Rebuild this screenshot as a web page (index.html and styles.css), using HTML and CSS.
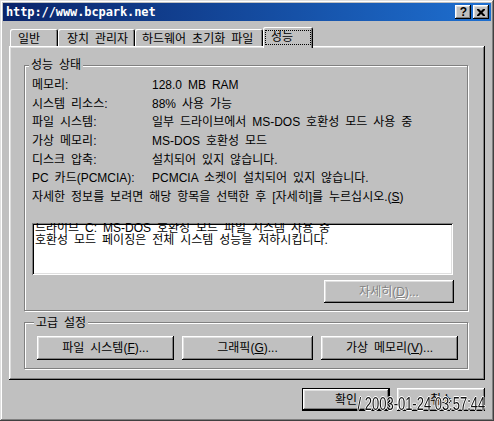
FILE: index.html
```html
<!DOCTYPE html>
<html lang="ko">
<head>
<meta charset="utf-8">
<title>시스템 등록 정보</title>
<link rel="stylesheet" href="styles.css">
</head>
<body>
<div class="window">
  <div class="titlebar">
    <span class="title">http://www.bcpark.net</span>
    <div class="tb-buttons">
      <span class="tb-btn help">?</span>
      <span class="tb-btn close">
        <svg width="8" height="7" viewBox="0 0 8 7"><path d="M0 0h2l2 2 2-2h2v1l-2.5 2.5 2.5 2.5v1h-2l-2-2-2 2h-2v-1l2.5-2.5-2.5-2.5z" fill="#000"/></svg>
      </span>
    </div>
  </div>
  <div class="tabs">
    <div class="tab t1">일반</div>
    <div class="tab t2">장치 관리자</div>
    <div class="tab t3">하드웨어 초기화 파일</div>
    <div class="tab sel"><span class="focus">성능</span></div>
  </div>
  <div class="panel">
    <fieldset class="group g1">
      <legend>성능 상태</legend>
      <div class="rows">
        <span>메모리:</span><span>128.0 MB RAM</span>
        <span>시스템 리소스:</span><span>88% 사용 가능</span>
        <span>파일 시스템:</span><span>일부 드라이브에서 MS-DOS 호환성 모드 사용 중</span>
        <span>가상 메모리:</span><span>MS-DOS 호환성 모드</span>
        <span>디스크 압축:</span><span>설치되어 있지 않습니다.</span>
        <span>PC 카드(PCMCIA):</span><span>PCMCIA 소켓이 설치되어 있지 않습니다.</span>
        <span class="full">자세한 정보를 보려면 해당 항목을 선택한 후 [자세히]를 누르십시오.(<u>S</u>)</span>
      </div>
      <div class="listbox">
        <div class="lb-text">드라이브 C: MS-DOS 호환성 모드 파일 시스템 사용 중<br>호환성 모드 페이징은 전체 시스템 성능을 저하시킵니다.</div>
      </div>
      <div class="detail-row">
        <button class="btn disabled detail">자세히(<u>D</u>)...</button>
      </div>
    </fieldset>
    <fieldset class="group g2">
      <legend>고급 설정</legend>
      <div class="adv">
        <button class="btn adv-a">파일 시스템(<u>F</u>)...</button>
        <button class="btn adv-b">그래픽(<u>G</u>)...</button>
        <button class="btn adv-a">가상 메모리(<u>V</u>)...</button>
      </div>
    </fieldset>
  </div>
  <div class="footer">
    <button class="btn default">확인</button>
    <button class="btn">취소</button>
  </div>
  <div class="stamp">/ 2003-01-24 03:57:44</div>
</div>
</body>
</html>
```

FILE: styles.css
```css
* { box-sizing: border-box; }
html, body { margin: 0; padding: 0; }
body {
  width: 494px;
  height: 421px;
  overflow: hidden;
  background: #c0c0c0;
  color: #000;
  font: 12px "Liberation Sans", "Noto Sans CJK KR", sans-serif;
  word-spacing: 2.6px;
}
.window {
  position: relative;
  width: 494px;
  height: 421px;
  padding: 3px;
  background: #c0c0c0;
  display: flex;
  flex-direction: column;
  box-shadow: inset -1px -1px #404040, inset 1px 1px #dfdfdf, inset -2px -2px #808080, inset 2px 2px #fff;
}
.titlebar {
  height: 18px;
  flex: none;
  display: flex;
  align-items: center;
  justify-content: space-between;
  padding: 0 2px 0 3px;
  background: linear-gradient(to right, #0a246a, #1e6fd0);
}
.title {
  color: #fff;
  font: bold 12px "DejaVu Sans Mono", monospace;
  letter-spacing: -0.1px;
  word-spacing: 0;
}
.tb-buttons { display: flex; gap: 2px; }
.tb-btn {
  width: 16px;
  height: 14px;
  background: #c0c0c0;
  display: flex;
  align-items: center;
  justify-content: center;
  box-shadow: inset -1px -1px #000, inset 1px 1px #fff, inset -2px -2px #808080, inset 2px 2px #dfdfdf;
  font: bold 12px "Liberation Sans", sans-serif;
  line-height: 14px;
}
.help { padding-left: 1px; }
.close svg { display: block; }

.tabs {
  flex: none;
  height: 20px;
  margin: 5px 6px 0;
  padding-left: 1px;
  display: flex;
  align-items: flex-end;
}
.tab {
  height: 17px;
  display: flex;
  align-items: center;
  padding-left: 8px;
  border-radius: 2px 2px 0 0;
  box-shadow: inset 1px 1px #fff, inset -1px 0 #000, inset -2px 0 #808080;
  white-space: nowrap;
}
.t1 { width: 48px; }
.t2 { width: 77px; padding-left: 9px; }
.t3 { width: 128px; padding-left: 7px; }
.sel {
  width: 50px;
  height: 21px;
  margin-bottom: -2px;
  padding-left: 2px;
  align-items: flex-start;
  padding-top: 3px;
  background: #c0c0c0;
  z-index: 1;
}
.focus {
  width: 46px;
  height: 15px;
  padding-left: 5px;
  line-height: 13px;
  border: 1px dotted #000;
}

.panel {
  flex: none;
  height: 334px;
  margin: 0 6px;
  padding: 12px 17px 0 15px;
  background: #c0c0c0;
  box-shadow: inset -1px -1px #000, inset 1px 1px #fff, inset -2px -2px #808080, inset 2px 2px #dfdfdf;
}
.group {
  margin: 0;
  min-width: 0;
  border: 1px solid #808080;
  box-shadow: inset 1px 1px #fff, 1px 1px 0 #fff;
}
.group legend {
  padding: 0 2px;
  margin-left: -3px;
  line-height: 14px;
  background: #c0c0c0;
}
.g1 { padding: 4px 14px 7px 7px; }
.rows {
  display: grid;
  grid-template-columns: 120px auto;
  line-height: 18.67px;
  white-space: nowrap;
}
.rows .full { grid-column: 1 / 3; }
.listbox {
  margin-top: 16px;
  height: 52px;
  background: #fff;
  overflow: hidden;
  padding: 2px 2px 2px 3px;
  box-shadow: inset 1px 1px #808080, inset -1px -1px #fff, inset 2px 2px #000, inset -2px -2px #dfdfdf;
}
.lb-text {
  margin-top: -3px;
  line-height: 12px;
  white-space: nowrap;
}
.detail-row {
  display: flex;
  justify-content: flex-end;
  margin-top: 5px;
}
.btn {
  font: 12px "Liberation Sans", "Noto Sans CJK KR", sans-serif;
  word-spacing: 2.6px;
  color: #000;
  height: 23px;
  padding: 0 0 2px;
  border: none;
  background: #c0c0c0;
  box-shadow: inset -1px -1px #000, inset 1px 1px #fff, inset -2px -2px #808080, inset 2px 2px #dfdfdf;
  white-space: nowrap;
}
.detail { width: 130px; margin-right: -1px; }
.disabled { color: #808080; text-shadow: 1px 1px 0 #fff; }

.g2 { margin-top: 5px; padding: 6px 0 8px 12px; }
.adv { display: flex; gap: 8px; }
.adv .btn { height: 24px; }
.adv-a { width: 137px; }
.adv-b { width: 131px; }

.footer {
  flex: none;
  display: flex;
  justify-content: flex-end;
  gap: 7px;
  margin: 8px 6px 0 0;
}
.footer .btn { width: 88px; height: 23px; }
.default {
  box-shadow: inset 0 0 0 1px #000, inset -2px -2px #000, inset 2px 2px #fff, inset -3px -3px #808080, inset 3px 3px #dfdfdf;
}
.stamp {
  position: absolute;
  right: 9px;
  bottom: 9px;
  font: 18px "Liberation Sans", sans-serif;
  word-spacing: 0;
  color: #111;
  transform: scaleX(0.72);
  transform-origin: right bottom;
  white-space: nowrap;
  line-height: 15px;
  text-shadow: 1px 0 #fff, -1px 0 #fff, 0 1px #fff, 0 -1px #fff;
}
```
